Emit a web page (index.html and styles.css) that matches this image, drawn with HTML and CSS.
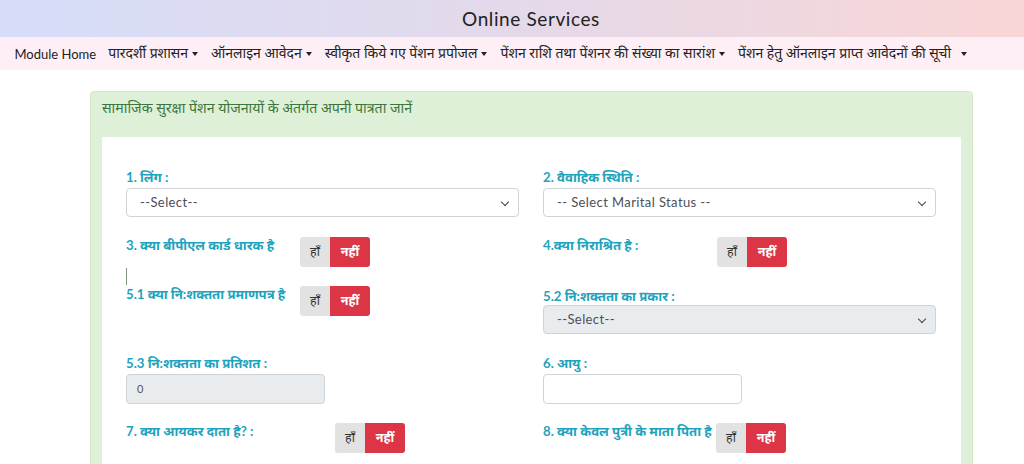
FILE: index.html
```html
<!DOCTYPE html>
<html lang="hi">
<head>
<meta charset="utf-8">
<title>Online Services</title>
<link rel="stylesheet" href="styles.css">
</head>
<body>
<header class="topbar">Online Services</header>
<nav class="menu">
  <a class="menu-item home">Module Home</a>
  <a class="menu-item dd">पारदर्शी प्रशासन</a>
  <a class="menu-item dd">ऑनलाइन आवेदन</a>
  <a class="menu-item dd">स्वीकृत किये गए पेंशन प्रपोजल</a>
  <a class="menu-item dd">पेंशन राशि तथा पेंशनर की संख्या का सारांश</a>
  <a class="menu-item dd wide">पेंशन हेतु ऑनलाइन प्राप्त आवेदनों की सूची</a>
</nav>
<main class="wrap">
  <section class="card">
    <div class="card-head">सामाजिक सुरक्षा पेंशन योजनायों के अंतर्गत अपनी पात्रता जानें</div>
    <div class="panel">
      <div class="row r1">
        <div class="field">
          <label class="lbl">1. लिंग :</label>
          <div class="select">--Select--<span class="chev"></span></div>
        </div>
        <div class="field">
          <label class="lbl">2. वैवाहिक स्थिति :</label>
          <div class="select">-- Select Marital Status --<span class="chev"></span></div>
        </div>
      </div>
      <div class="row r2">
        <div class="field">
          <div class="q"><span class="lbl qlbl">3. क्या बीपीएल कार्ड धारक है</span><span class="toggle"><span class="yes">हाँ</span><span class="no">नहीं</span></span></div>
          <span class="caret-line"></span>
        </div>
        <div class="field">
          <div class="q"><span class="lbl qlbl">4.क्या निराश्रित है :</span><span class="toggle"><span class="yes">हाँ</span><span class="no">नहीं</span></span></div>
        </div>
      </div>
      <div class="row r3">
        <div class="field">
          <div class="q"><span class="lbl qlbl">5.1 क्या नि:शक्तता प्रमाणपत्र है</span><span class="toggle"><span class="yes">हाँ</span><span class="no">नहीं</span></span></div>
        </div>
        <div class="field f52">
          <label class="lbl">5.2 नि:शक्तता का प्रकार :</label>
          <div class="select disabled">--Select--<span class="chev"></span></div>
        </div>
      </div>
      <div class="row r4">
        <div class="field">
          <label class="lbl">5.3 नि:शक्तता का प्रतिशत :</label>
          <div class="input disabled">0</div>
        </div>
        <div class="field">
          <label class="lbl">6. आयु :</label>
          <div class="input"></div>
        </div>
      </div>
      <div class="row r5">
        <div class="field">
          <div class="q"><span class="lbl qlbl q7">7. क्या आयकर दाता है? :</span><span class="toggle"><span class="yes">हाँ</span><span class="no">नहीं</span></span></div>
        </div>
        <div class="field">
          <div class="q"><span class="lbl qlbl q8">8. क्या केवल पुत्री के माता पिता है</span><span class="toggle"><span class="yes">हाँ</span><span class="no">नहीं</span></span></div>
        </div>
      </div>
    </div>
  </section>
</main>
</body>
</html>
```
FILE: styles.css
```css
* { box-sizing: border-box; }
body {
  margin: 0;
  background: #fff;
  font-family: "Lato", "Noto Sans Devanagari", "Lohit Devanagari", "Noto Sans", sans-serif;
  color: #212529;
  font-size: 13px;
}
.topbar {
  height: 37px;
  padding-left: 38px;
  background: linear-gradient(90deg, #d5ddf9 0%, #e4d9ea 50%, #f9d6d6 100%);
  text-align: center;
  font-size: 19px;
  line-height: 37px;
  color: #222;
  letter-spacing: 0.6px;
}
.menu {
  height: 33px;
  background: #fdeff5;
  display: flex;
  align-items: center;
  padding-left: 8px;
  white-space: nowrap;
}
.menu-item {
  padding: 0 6.5px;
  font-size: 14px;
  color: #222;
}
.menu-item.home { font-size: 13px; padding-right: 5.5px; }
.dd::after {
  content: "";
  display: inline-block;
  margin-left: 4px;
  vertical-align: 2px;
  border-top: 4px solid #222;
  border-left: 3.5px solid transparent;
  border-right: 3.5px solid transparent;
}
.wide::after { margin-left: 10px; }
.wrap {
  padding: 21px 0 0 90px;
}
.card {
  width: 883px;
  background: #dff0d8;
  border: 1px solid #d6e9c6;
  border-radius: 4px 4px 0 0;
  padding: 0 11px;
}
.card-head {
  height: 45px;
  padding-top: 6px;
  color: #3c763d;
  font-size: 14.2px;
  line-height: 19px;
}
.panel {
  background: #fff;
  padding: 32px 25px 20px 24px;
  height: 340px;
}
.row {
  display: grid;
  grid-template-columns: 393px 393px;
  column-gap: 24px;
  align-items: start;
}
.r1 { margin-bottom: 20px; }
.r2 { margin-bottom: 1px; }
.r3 { margin-bottom: 21px; }
.r4 { margin-bottom: 19px; }
.field { display: flex; flex-direction: column; }
.lbl {
  display: block;
  color: #1ea3bd;
  font-weight: 700;
  font-size: 13.2px;
  line-height: 17px;
  margin-bottom: 2px;
}
.f52 { padding-top: 2px; }
.f52 .lbl { margin-bottom: 0; }
.q { display: flex; align-items: flex-start; }
.qlbl { width: 174px; flex: none; margin: 0; }
.qlbl.q7 { width: 209px; }
.qlbl.q8 { width: 173px; white-space: nowrap; }
.toggle {
  display: flex;
  height: 30px;
  border-radius: 3px;
  overflow: hidden;
  font-size: 12.5px;
  line-height: 30px;
}
.yes {
  width: 30px;
  background: #e2e2e2;
  color: #333;
  text-align: center;
}
.no {
  width: 40px;
  background: #dc3545;
  color: #fff;
  font-weight: 700;
  text-align: center;
}
.caret-line {
  display: block;
  width: 1px;
  height: 17px;
  margin-top: 1px;
  background: #7a9a7a;
}
.select {
  position: relative;
  height: 29px;
  border: 1px solid #ced4da;
  border-radius: 4px;
  padding-left: 13px;
  line-height: 27px;
  color: #495057;
  font-size: 13px;
  background: #fff;
  letter-spacing: 0.4px;
}
.select.disabled, .input.disabled { background: #e9ecef; }
.chev {
  position: absolute;
  right: 10px;
  top: 10px;
  width: 6px;
  height: 6px;
  border-right: 1.5px solid #444;
  border-bottom: 1.5px solid #444;
  transform: rotate(45deg);
}
.input {
  width: 199px;
  height: 30px;
  border: 1px solid #ced4da;
  border-radius: 4px;
  padding-left: 10px;
  line-height: 28px;
  font-size: 11px;
  color: #555;
  background: #fff;
}
```
